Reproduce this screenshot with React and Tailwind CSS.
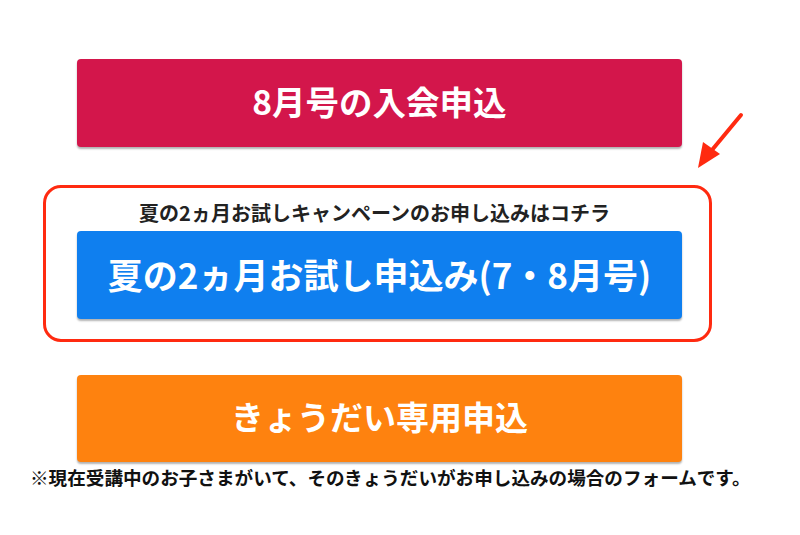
export default function App() {
  const jp = { fontFamily: '"Noto Sans CJK JP", "Noto Sans", sans-serif' }
  return (
    <div className="relative w-[800px] h-[535px] bg-white overflow-hidden" style={jp}>
      <div className="pt-[59px]">
        <button className="ml-[77px] w-[605px] h-[88px] rounded-[4px] bg-[#d3164b] text-white text-[33.5px] leading-none font-bold shadow-[0_2px_2px_rgba(0,0,0,0.3)] flex items-center justify-center pb-[4px]">
          8月号の入会申込
        </button>

        <div className="ml-[43px] mt-[38px] w-[669px] h-[157px] border-[3px] border-[#ff2a10] rounded-[18px] flex flex-col items-start">
          <p className="mt-[12px] self-center ml-[-6px] text-[20px] leading-[26px] font-bold text-[#222]">
            夏の2ヵ月お試しキャンペーンのお申し込みはコチラ
          </p>
          <button className="mt-[5px] ml-[31px] w-[605px] h-[88px] rounded-[4px] bg-[#0f7fef] text-white text-[35px] leading-none font-bold shadow-[0_2px_2px_rgba(0,0,0,0.3)] flex items-center justify-center pb-[4px]">
            夏の2ヵ月お試し申込み(7・8月号)
          </button>
        </div>

        <button className="ml-[77px] mt-[33px] w-[605px] h-[87px] rounded-[4px] bg-[#fe820f] text-white text-[33px] leading-none font-bold shadow-[0_2px_2px_rgba(0,0,0,0.3)] flex items-center justify-center pb-[4px]">
          きょうだい専用申込
        </button>
        <p className="ml-[30px] mt-[2px] text-[18.6px] leading-[26px] font-bold text-[#111] whitespace-nowrap">
          ※現在受講中のお子さまがいて、そのきょうだいがお申し込みの場合のフォームです。
        </p>
      </div>

      <svg className="absolute left-[690px] top-[110px]" width="60" height="65" viewBox="0 0 60 65">
        <line x1="51" y1="5" x2="22" y2="40" stroke="#ff2a10" strokeWidth="4" strokeLinecap="round" />
        <polygon points="8,58 13,32 30,44" fill="#ff2a10" />
      </svg>
    </div>
  )
}
